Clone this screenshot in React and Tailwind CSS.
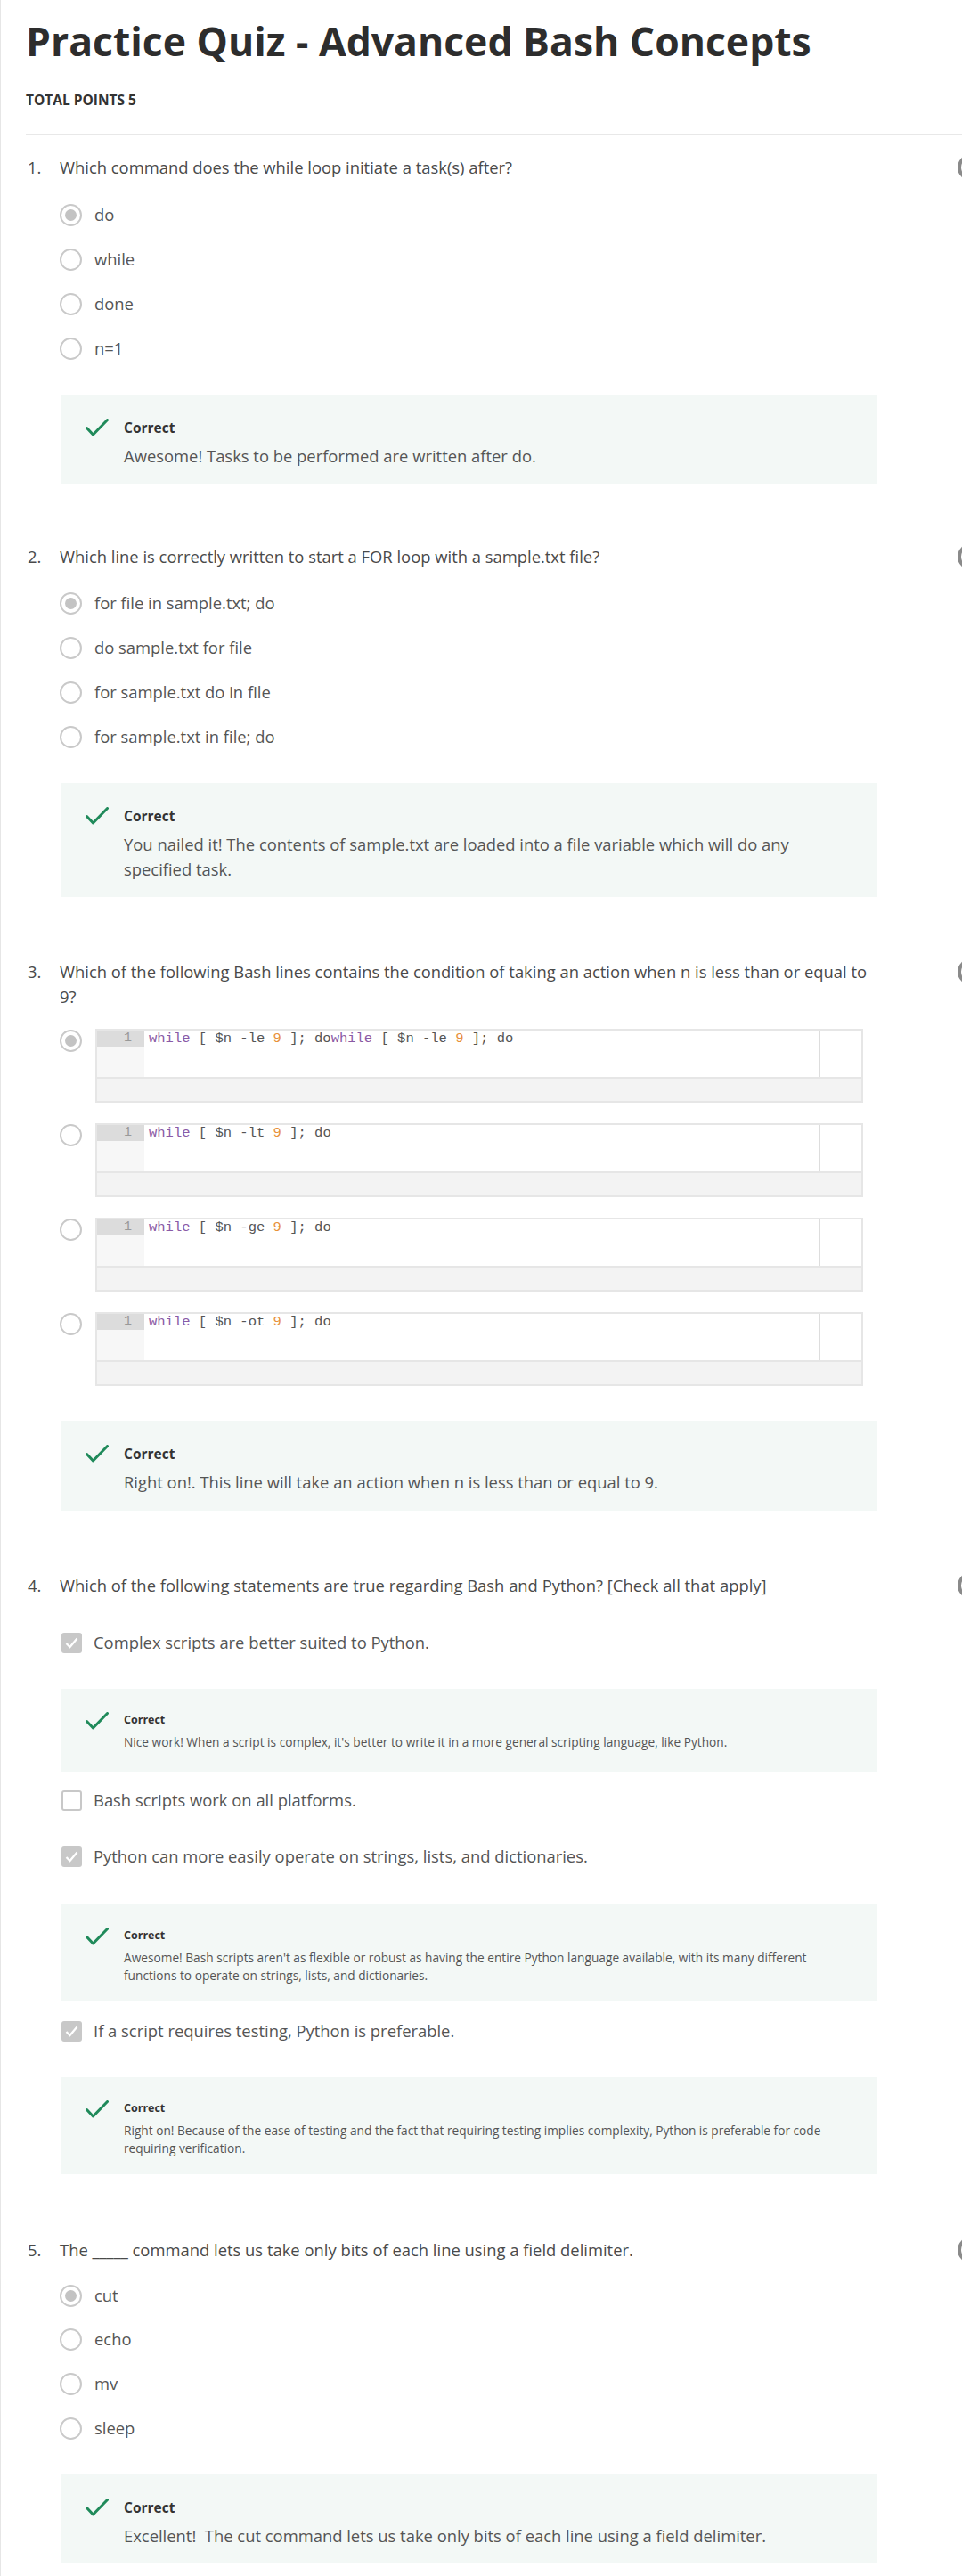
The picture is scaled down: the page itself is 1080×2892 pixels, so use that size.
const font = { fontFamily: '"Open Sans", "Liberation Sans", sans-serif' };

const Check = () => (
  <svg width="26" height="20" viewBox="0 0 26 20" fill="none">
    <path d="M1.5 10.5 L8.5 18 L24.5 1.5" stroke="#1f8a5a" strokeWidth="3" strokeLinecap="round" strokeLinejoin="round" />
  </svg>
);

const Radio = ({ on }) => (
  <span className="flex h-[25px] w-[25px] shrink-0 items-center justify-center rounded-full border-[2.5px] border-[#c9c9c9] bg-white">
    {on && <span className="h-[13px] w-[13px] rounded-full bg-[#c3c3c3]" />}
  </span>
);

const Box = ({ on }) =>
  on ? (
    <span className="flex h-[23px] w-[23px] shrink-0 items-center justify-center rounded-[3px] bg-[#c8c8c8]">
      <svg width="15" height="13" viewBox="0 0 15 13" fill="none">
        <path d="M1.5 7 L5.5 11 L13.5 1.5" stroke="#fff" strokeWidth="2.2" />
      </svg>
    </span>
  ) : (
    <span className="h-[23px] w-[23px] shrink-0 rounded-[3px] border-2 border-[#c8c8c8] bg-white" />
  );

const Question = ({ n, children }) => (
  <div className="relative flex text-[18.4px] leading-[28px] text-[#4a4a4a]">
    <span className="w-[38px] shrink-0 pl-[2px]">{n}.</span>
    <p className="w-[915px]">{children}</p>
    <span className="absolute left-[1046px] top-[-1px] h-[30px] w-[30px] rounded-full border-[4px] border-[#8a8a8a]" />
  </div>
);

const Option = ({ on, children, className = "" }) => (
  <div className={`ml-[38px] flex h-[28px] items-center gap-[14px] text-[18.4px] text-[#555] ${className}`}>
    <Radio on={on} />
    <span>{children}</span>
  </div>
);

const CheckOpt = ({ on, children, className = "" }) => (
  <div className={`ml-[40px] flex h-[28px] items-center gap-[13px] text-[18.4px] text-[#555] ${className}`}>
    <Box on={on} />
    <span>{children}</span>
  </div>
);

const Feedback = ({ children, small, className = "" }) => (
  <div className={`ml-[39px] flex w-[917px] bg-[#f3f8f6] pl-[28px] pr-[40px] pt-[26px] ${className}`}>
    <div className={`w-[43px] shrink-0 ${small ? "pt-[0px]" : "pt-[1px]"}`}>
      <Check />
    </div>
    <div className="flex-1">
      <div className={`font-bold text-[#333] ${small ? "text-[12.5px] leading-[18px]" : "text-[15.5px] leading-[22px]"}`}>Correct</div>
      <p className={`text-[#555] ${small ? "mt-[6px] text-[13.7px] leading-[20px]" : "mt-[7px] text-[18.4px] leading-[28px]"}`}>{children}</p>
    </div>
  </div>
);

const Code = ({ op, on, className = "" }) => (
  <div className={`ml-[38px] flex gap-[15px] ${className}`}>
    <div className="mt-[1px]">
      <Radio on={on} />
    </div>
    <div className="w-[862px] border-2 border-[#e6e6e6] bg-white" style={{ fontFamily: '"Liberation Mono", monospace' }}>
      <div className="flex h-[52px]">
        <div className="w-[53px] bg-[#f7f7f7]">
          <div className="h-[18px] bg-[#dcdcdc] pr-[14px] text-right text-[15px] leading-[18px] text-[#999]">1</div>
        </div>
        <div className="flex-1 border-r border-[#dddddd] pl-[5px] text-[15.5px] leading-[18px] text-[#555]">
          {op === "le" ? (
            <>
              <span className="text-[#8a5aa6]">while</span> [ $n -le <span className="text-[#e8913a]">9</span> ]; do
              <span className="text-[#8a5aa6]">while</span> [ $n -le <span className="text-[#e8913a]">9</span> ]; do
            </>
          ) : (
            <>
              <span className="text-[#8a5aa6]">while</span> [ $n -{op} <span className="text-[#e8913a]">9</span> ]; do
            </>
          )}
        </div>
        <div className="w-[46px]" />
      </div>
      <div className="h-[27px] border-t-2 border-[#e6e6e6] bg-[#f3f3f3]" />
    </div>
  </div>
);

export default function App() {
  return (
    <div className="min-h-[2892px] w-[1080px] overflow-hidden border-l border-[#e6e6e6] bg-white pl-[28px]" style={font}>
      <h1 className="pt-[24px] text-[44.5px] font-bold leading-[44px] text-[#2d2d2d]">Practice Quiz - Advanced Bash Concepts</h1>
      <div className="mt-[34px] text-[15.5px] font-bold leading-[20px] text-[#333]">TOTAL POINTS 5</div>
      <div className="mt-[28px] h-[2px] bg-[#e8e8e8]" />

      <div className="mt-[22px]">
        <Question n={1}>Which command does the while loop initiate a task(s) after?</Question>
        <Option on className="mt-[25px]">do</Option>
        <Option className="mt-[22px]">while</Option>
        <Option className="mt-[22px]">done</Option>
        <Option className="mt-[22px]">n=1</Option>
        <Feedback className="mt-[38px] pb-[17px]">Awesome! Tasks to be performed are written after do.</Feedback>
      </div>

      <div className="mt-[68px]">
        <Question n={2}>Which line is correctly written to start a FOR loop with a sample.txt file?</Question>
        <Option on className="mt-[24px]">for file in sample.txt; do</Option>
        <Option className="mt-[22px]">do sample.txt for file</Option>
        <Option className="mt-[22px]">for sample.txt do in file</Option>
        <Option className="mt-[22px]">for sample.txt in file; do</Option>
        <Feedback className="mt-[38px] pb-[17px]">
          You nailed it! The contents of sample.txt are loaded into a file variable which will do any specified task.
        </Feedback>
      </div>

      <div className="mt-[70px]">
        <Question n={3}>
          Which of the following Bash lines contains the condition of taking an action when n is less than or equal to 9?
        </Question>
        <Code on op="le" className="mt-[22px]" />
        <Code op="lt" className="mt-[23px]" />
        <Code op="ge" className="mt-[23px]" />
        <Code op="ot" className="mt-[23px]" />
        <Feedback className="mt-[39px] pb-[18px]">Right on!. This line will take an action when n is less than or equal to 9.</Feedback>
      </div>

      <div className="mt-[70px]">
        <Question n={4}>Which of the following statements are true regarding Bash and Python? [Check all that apply]</Question>
        <CheckOpt on className="mt-[36px]">Complex scripts are better suited to Python.</CheckOpt>
        <Feedback small className="mt-[38px] pb-[23px]">
          Nice work! When a script is complex, it's better to write it in a more general scripting language, like Python.
        </Feedback>
        <CheckOpt className="mt-[18px]">Bash scripts work on all platforms.</CheckOpt>
        <CheckOpt on className="mt-[35px]">Python can more easily operate on strings, lists, and dictionaries.</CheckOpt>
        <Feedback small className="mt-[40px] pb-[19px]">
          Awesome! Bash scripts aren't as flexible or robust as having the entire Python language available, with its many
          different functions to operate on strings, lists, and dictionaries.
        </Feedback>
        <CheckOpt on className="mt-[19px]">If a script requires testing, Python is preferable.</CheckOpt>
        <Feedback small className="mt-[38px] pb-[19px]">
          Right on! Because of the ease of testing and the fact that requiring testing implies complexity, Python is
          preferable for code requiring verification.
        </Feedback>
      </div>

      <div className="mt-[71px]">
        <Question n={5}>The _____ command lets us take only bits of each line using a field delimiter.</Question>
        <Option on className="mt-[23px]">cut</Option>
        <Option className="mt-[21px]">echo</Option>
        <Option className="mt-[22px]">mv</Option>
        <Option className="mt-[22px]">sleep</Option>
        <Feedback className="mt-[38px] pb-[16px]">
          Excellent!&nbsp; The cut command lets us take only bits of each line using a field delimiter.
        </Feedback>
      </div>
    </div>
  );
}
